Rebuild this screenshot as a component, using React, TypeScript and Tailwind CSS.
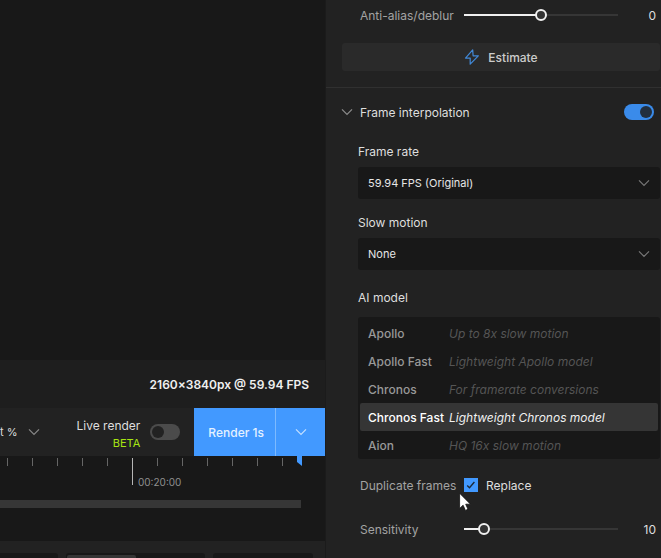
import { useId, useState } from "react";
import { clsx } from "clsx";

const models = [
  { name: "Apollo", hint: "Up to 8x slow motion" },
  { name: "Apollo Fast", hint: "Lightweight Apollo model" },
  { name: "Chronos", hint: "For framerate conversions" },
  { name: "Chronos Fast", hint: "Lightweight Chronos model" },
  { name: "Aion", hint: "HQ 16x slow motion" },
];

// Timecodes for the ruler, an empty entry is a minor tick
const ticks = ["", "", "", "", "", "00:20:00", "", "", "", "", "", ""];

function Chevron({ className }: { className?: string }) {
  return (
    <svg viewBox="0 0 12 8" className={clsx("h-2 w-3 shrink-0", className)} fill="none" stroke="currentColor" strokeWidth="1.2" aria-hidden="true">
      <path d="M1 1.3 6 6.3 11 1.3" />
    </svg>
  );
}

function Toggle({ label, checked, onChange }: { label: string; checked: boolean; onChange: (value: boolean) => void }) {
  return (
    <button
      type="button"
      role="switch"
      aria-checked={checked}
      aria-label={label}
      onClick={() => onChange(!checked)}
      className={clsx("flex h-4 w-[30px] shrink-0 items-center rounded-full px-[2px]", checked ? "justify-end bg-[#3a8bea]" : "justify-start bg-[#4b4b4b]")}
    >
      <span className={clsx("size-3 rounded-full", checked ? "bg-[#222f3f]" : "bg-[#222222]")} />
    </button>
  );
}

function SliderRow({ label, min, max, initial }: { label: string; min: number; max: number; initial: number }) {
  const id = useId();
  const [value, setValue] = useState(initial);
  const percent = ((value - min) / (max - min)) * 100;

  return (
    <div className="flex h-11 items-center pr-1 pl-[34px]">
      <label htmlFor={id} className="w-[104px] shrink-0 text-[#a3a3a3]">{label}</label>
      <input
        id={id}
        type="range"
        min={min}
        max={max}
        value={value}
        onChange={(e) => setValue(Number(e.target.value))}
        className="h-3 min-w-0 flex-1 appearance-none bg-[length:100%_2px] bg-center bg-no-repeat [&::-webkit-slider-thumb]:size-3 [&::-webkit-slider-thumb]:appearance-none [&::-webkit-slider-thumb]:rounded-full [&::-webkit-slider-thumb]:border-2 [&::-webkit-slider-thumb]:border-[#f0f0f0] [&::-webkit-slider-thumb]:bg-[#333333]"
        style={{ backgroundImage: `linear-gradient(to right, #f0f0f0 ${percent}%, #363636 ${percent}%)` }}
      />
      <output htmlFor={id} className="w-[38px] shrink-0 text-right text-[#dedede]">{value}</output>
    </div>
  );
}

function SelectField({ label, options }: { label: string; options: string[] }) {
  const id = useId();

  return (
    <div>
      <label htmlFor={id} className="flex h-[31px] items-center">{label}</label>
      <div className="relative">
        <select id={id} className="h-8 w-full appearance-none rounded-[3px] bg-[#181818] px-[10px] text-[11px] text-[#e6e6e6]">
          {options.map((option) => <option key={option}>{option}</option>)}
        </select>
        <Chevron className="pointer-events-none absolute top-3 right-[10px] text-[#777777]" />
      </div>
    </div>
  );
}

function Timeline() {
  return (
    <div className="relative h-[85px] bg-[#181818] pt-[2px]">
      <div className="flex h-[42px] items-start overflow-hidden pl-[7px]">
        {ticks.map((time, i) => (
          <div key={i} className={clsx("flex w-[25px] shrink-0 border-l", time ? "h-[27px] items-end border-[#b5b5b5]" : "h-2 border-[#666666]")}>
            {time ? <span className="pl-[5px] text-[10px] leading-[6px] text-[#8f8f8f]">{time}</span> : null}
          </div>
        ))}
      </div>
      <div className="mr-6 h-2 bg-[#363636]" />
      <svg viewBox="0 0 5 10" className="absolute top-0 right-[23px] h-[10px] w-[5px]" aria-hidden="true">
        <path d="M0 0h5v10L0 6z" fill="#4299ff" />
      </svg>
    </div>
  );
}

function Workspace() {
  const [live, setLive] = useState(false);

  return (
    <main className="flex min-w-0 flex-1 flex-col bg-[#181818]">
      <div className="flex-1" />
      <div className="flex h-12 items-center justify-end bg-[#1e1e1e] pr-4 font-semibold text-[#f0f0f0]">2160×3840px @ 59.94 FPS</div>
      <div className="flex h-12 items-stretch bg-[#222222]">
        <button type="button" className="flex items-center gap-[10px] text-[11px]">
          <span>t %</span>
          <Chevron className="text-[#888888]" />
        </button>
        <div className="ml-auto flex items-center gap-[10px] pr-[14px]">
          <div className="pt-1 text-right">
            <div className="leading-[18px]">Live render</div>
            <div className="text-[11px] leading-[17px] text-[#a6e512]">BETA</div>
          </div>
          <Toggle label="Live render" checked={live} onChange={setLive} />
        </div>
        <button type="button" className="border-r border-[#7dbaff] bg-[#4299ff] pr-[11px] pl-[14px] font-medium whitespace-nowrap text-[#e4f1ff]">Render 1s</button>
        <button type="button" aria-label="Render options" className="grid w-[49px] place-items-center bg-[#4299ff] text-[#c4e0ff]">
          <Chevron />
        </button>
      </div>
      <Timeline />
      <div className="flex h-[17px] items-end gap-2 bg-[#222222] pr-3">
        <div className="h-[5px] w-[58px] rounded-tr-[3px] bg-[#181818]" />
        <div className="h-[5px] flex-1 rounded-t-[3px] bg-[#181818] px-px pt-[2px]">
          <div className="h-[3px] w-1/2 rounded-t-[2px] bg-[#363636]" />
        </div>
        <div className="h-[5px] w-[100px] rounded-t-[3px] bg-[#181818]" />
      </div>
    </main>
  );
}

function SettingsPanel() {
  const [enabled, setEnabled] = useState(true);
  const [model, setModel] = useState("Chronos Fast");
  const [replace, setReplace] = useState(true);

  return (
    <aside className="w-[336px] shrink-0 border-l border-[#1b1b1b] bg-[#222222] pr-px">
      <div className="-mt-[7px]">
        <SliderRow label="Anti-alias/deblur" min={-100} max={100} initial={0} />
      </div>
      <div className="-mr-px border-b border-[#303030] pt-[6px] pr-px pb-4 pl-4">
        <button type="button" className="flex h-7 w-full items-center justify-center gap-2 rounded-[3px] bg-[#2a2a2a] font-medium text-[#cccccc]">
          <svg viewBox="0 0 16 16" className="size-4" fill="none" stroke="#4189d8" strokeWidth="1.2" strokeLinejoin="round" aria-hidden="true">
            <path d="M8.7.8 1.5 9.1h4.7v6.1l8.1-8.4H9.1z" />
          </svg>
          Estimate
        </button>
      </div>

      <div className="flex h-12 items-center pr-[6px] pl-[15px]">
        <button type="button" className="flex items-center gap-[7px]" aria-expanded="true">
          <Chevron className="text-[#8c8c8c]" />
          <span>Frame interpolation</span>
        </button>
        <div className="ml-auto">
          <Toggle label="Frame interpolation" checked={enabled} onChange={setEnabled} />
        </div>
      </div>

      <div className="flex flex-col gap-2 pl-8">
        <SelectField label="Frame rate" options={["59.94 FPS (Original)"]} />
        <SelectField label="Slow motion" options={["None"]} />
      </div>

      <fieldset className="mt-3 pl-8">
        <legend className="mb-1 flex h-[31px] items-center">AI model</legend>
        <div className="overflow-hidden rounded-[3px] bg-[#181818] px-[2px] pt-[2px]">
          {models.map(({ name, hint }) => (
            <label key={name} className={clsx("flex h-7 items-center rounded-[2px] px-2", name === model ? "bg-[#353535] text-white" : "text-[#999999]")}>
              <input type="radio" name="model" value={name} checked={name === model} onChange={() => setModel(name)} className="w-0 appearance-none" />
              <span className="w-[81px] shrink-0 font-medium whitespace-nowrap">{name}</span>
              <span className={clsx("italic", name === model ? "text-[#f0f0f0]" : "text-[#555555]")}>{hint}</span>
            </label>
          ))}
        </div>
      </fieldset>

      <div className="relative mt-1 flex h-11 items-center pl-[34px]">
        <span className="w-[104px] shrink-0 text-[#a3a3a3]">Duplicate frames</span>
        <label className="flex items-center gap-2">
          <span className="grid size-[14px] place-items-center">
            <input type="checkbox" checked={replace} onChange={(e) => setReplace(e.target.checked)} className="col-start-1 row-start-1 size-[14px] appearance-none bg-[#333333] checked:bg-[#4299ff]" />
            {replace ? (
              <svg viewBox="0 0 14 14" className="pointer-events-none col-start-1 row-start-1 size-[14px]" fill="none" stroke="#1c2938" strokeWidth="1.4" aria-hidden="true">
                <path d="m3.2 7.4 2.3 2.3L10.4 4" />
              </svg>
            ) : null}
          </span>
          Replace
        </label>
        <svg viewBox="0 0 12 19" className="pointer-events-none absolute top-[29px] left-[133px] h-[19px] w-3" aria-hidden="true">
          <path d="M.6 1.2v15.3l3.5-3.3 2.3 5.2 2.6-1.1-2.3-5.1h4.8z" fill="#ffffff" stroke="#111111" strokeWidth="0.8" />
        </svg>
      </div>
      <SliderRow label="Sensitivity" min={0} max={100} initial={10} />
    </aside>
  );
}

export default function App() {
  return (
    <div className="flex min-h-screen overflow-hidden bg-[#222222] font-[Inter,sans-serif] text-[12px] leading-[17px] text-[#dedede]">
      <Workspace />
      <SettingsPanel />
    </div>
  );
}
